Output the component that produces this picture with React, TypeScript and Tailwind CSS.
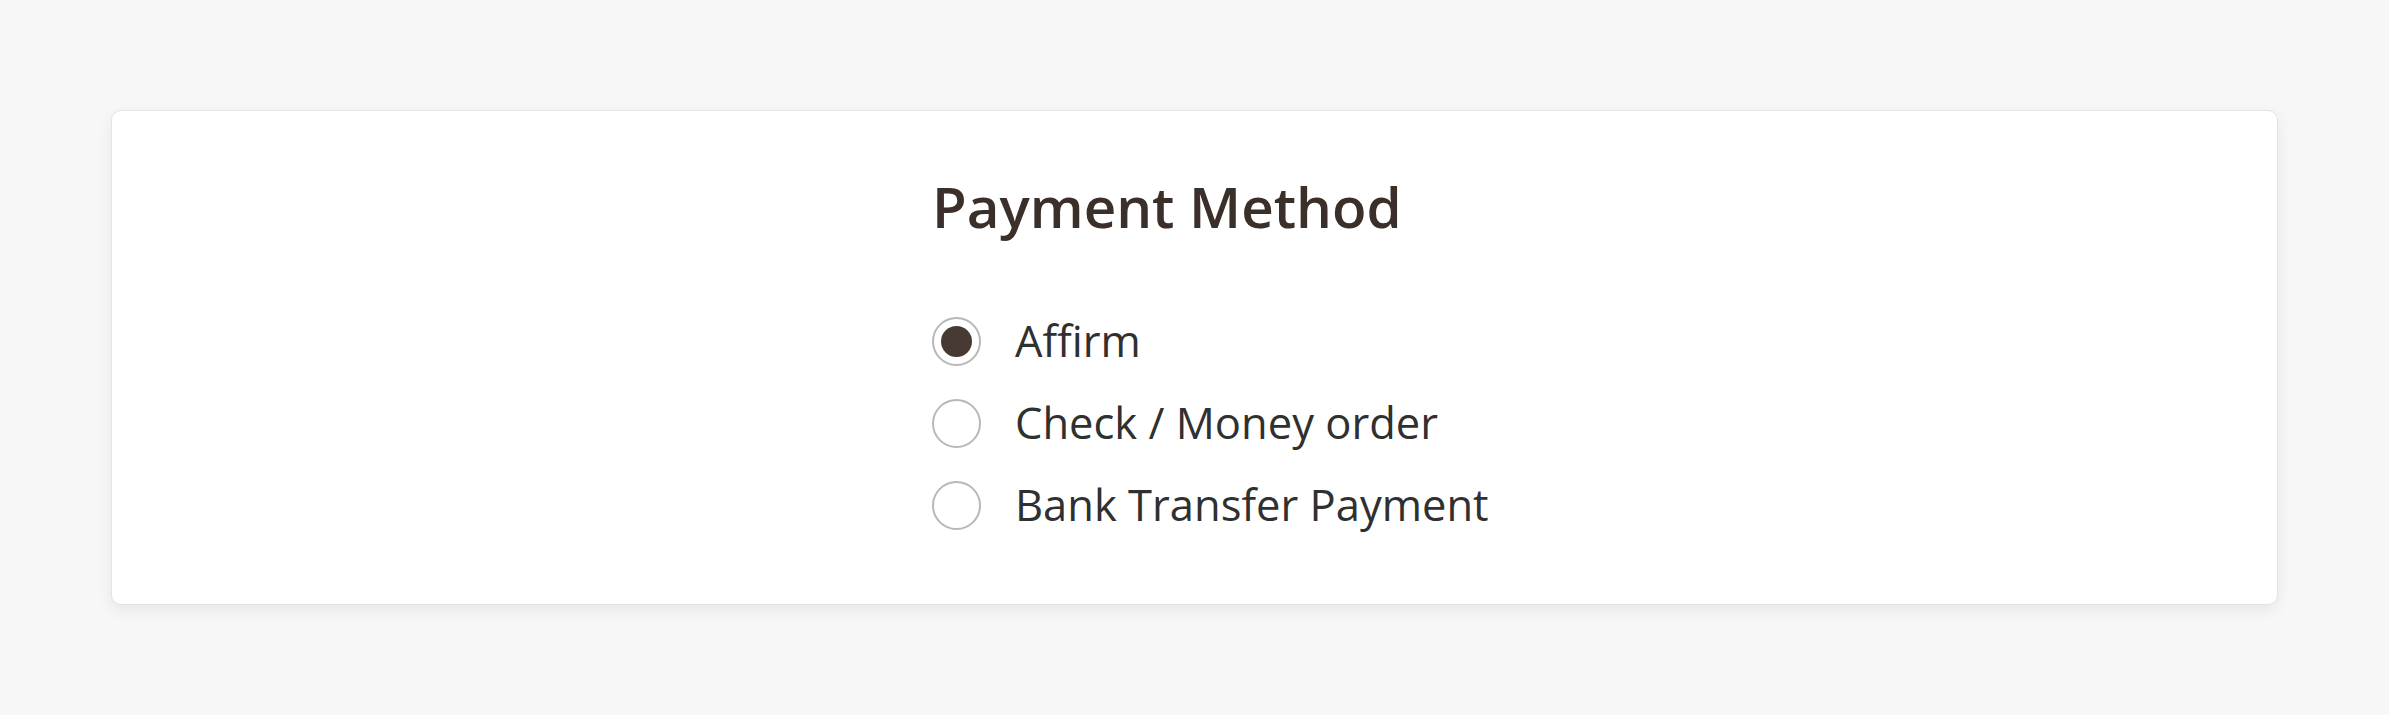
import { useState } from 'react';

const methods = ['Affirm', 'Check / Money order', 'Bank Transfer Payment'];

const App = () => {
  const [selected, setSelected] = useState(0);

  return (
    <div className="min-h-[715px] bg-[#f7f7f7] px-[111px] pt-[110px] pb-[113px] font-['Open_Sans',sans-serif]">
      <section className="rounded-[10px] border border-[#e4e4e4] bg-white pl-[820px] pt-[58px] pb-[58px] shadow-[0_5px_16px_rgba(0,0,0,0.07)]">
        <h2 className="text-[56.5px] leading-[76px] font-semibold text-[#3b2f29] whitespace-nowrap">
          Payment Method
        </h2>

        <div className="mt-[55px] flex flex-col">
          {methods.map((label, index) => (
            <label
              key={label}
              onClick={() => setSelected(index)}
              className="flex h-[82px] cursor-pointer items-center gap-[34px] whitespace-nowrap"
            >
              <span className="flex h-[49px] w-[49px] flex-shrink-0 items-center justify-center rounded-full border-2 border-[#b8b8b8] bg-white">
                {selected === index && (
                  <span className="h-[31px] w-[31px] rounded-full bg-[#463a33]"></span>
                )}
              </span>
              <span className="text-[43.5px] leading-[82px] text-[#303030]">{label}</span>
            </label>
          ))}
        </div>
      </section>
    </div>
  );
};

export default App;
